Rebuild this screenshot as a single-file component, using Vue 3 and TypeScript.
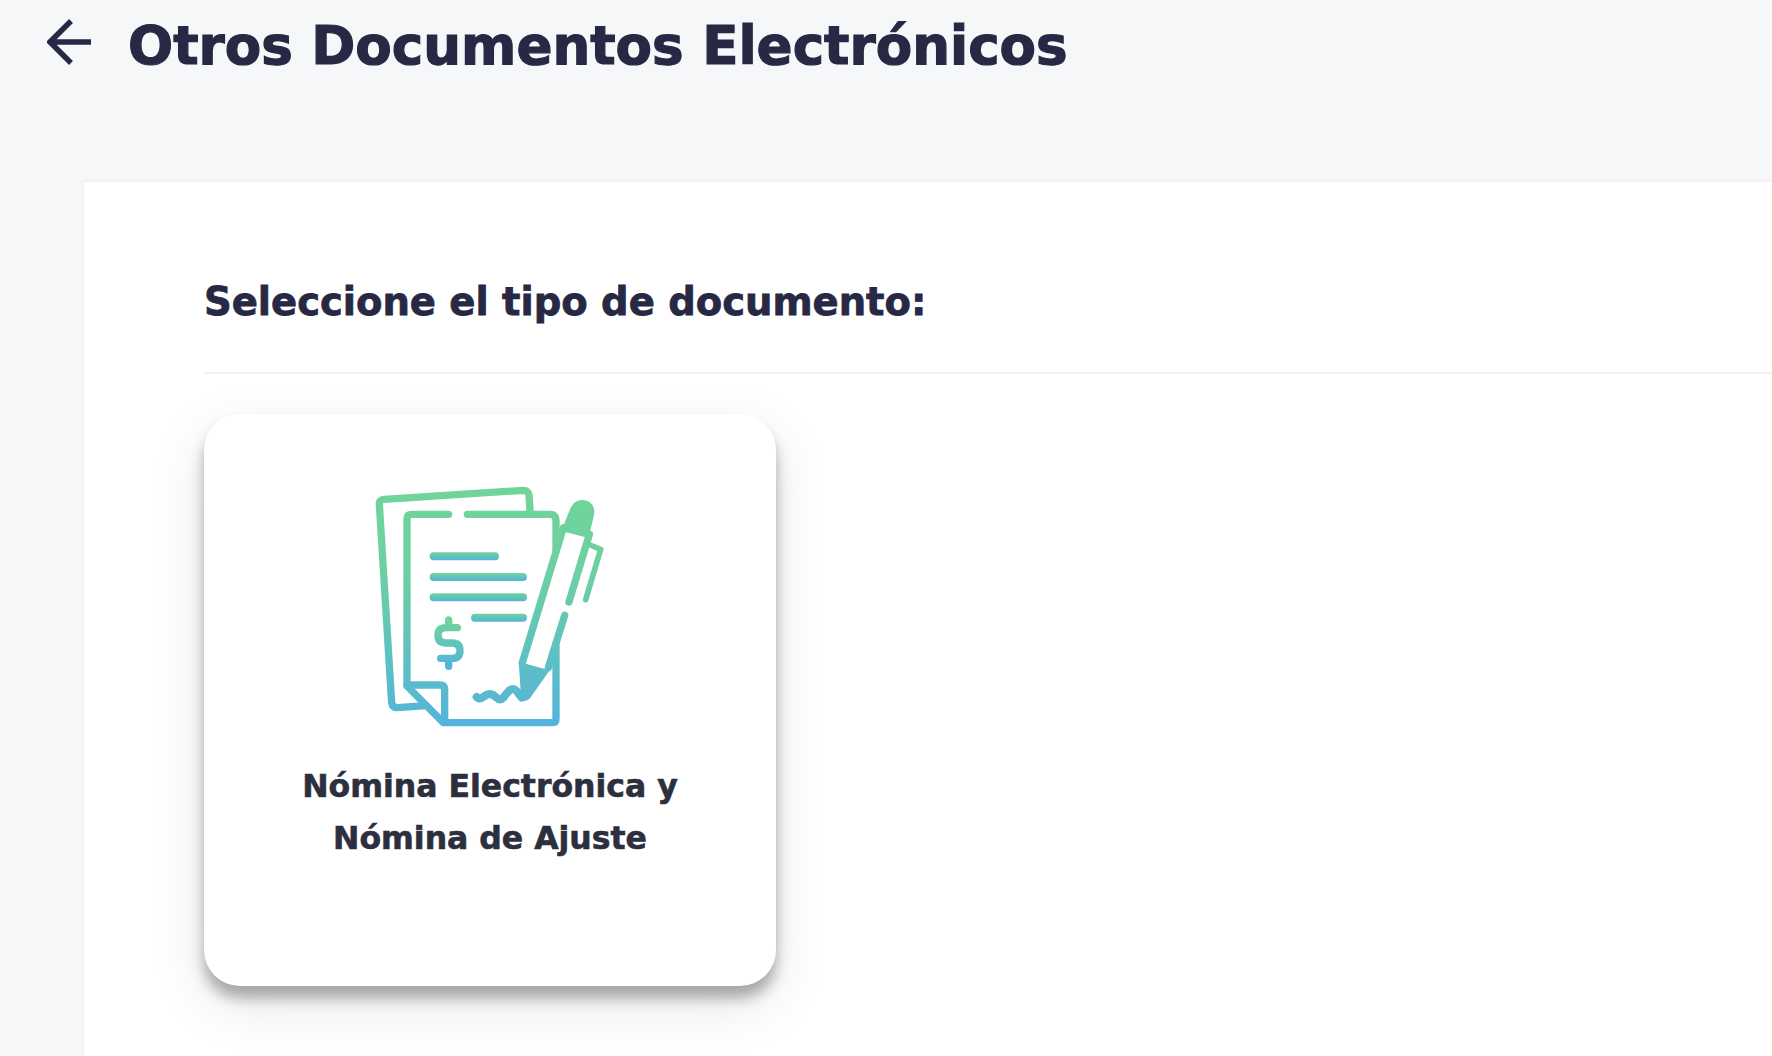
<script setup lang="ts">
const lines = [
  { x: 209, y: 244, w: 208 },
  { x: 209, y: 306, w: 292 },
  { x: 209, y: 367, w: 292 },
  { x: 333, y: 428, w: 168 },
]
</script>

<template>
  <div class="page">
    <header class="top">
      <svg class="back" viewBox="0 0 48 48" width="48" height="48" aria-hidden="true">
        <path d="M44 24H3M24 3 3 24l21 21" fill="none" stroke="#272944" stroke-width="5.5" />
      </svg>
      <h1>Otros Documentos Electrónicos</h1>
    </header>
    <main class="panel">
      <h2>Seleccione el tipo de documento:</h2>
      <hr />
      <button class="card" type="button">
        <svg class="doc" viewBox="0 0 810 810" width="270" height="270" aria-hidden="true">
          <defs>
            <linearGradient id="pg" gradientUnits="userSpaceOnUse" x1="0" y1="50" x2="0" y2="765">
              <stop offset="0" stop-color="#70d49a" />
              <stop offset="0.35" stop-color="#6dd0a2" />
              <stop offset="1" stop-color="#53b3dc" />
            </linearGradient>
            <linearGradient id="lg" x1="0" y1="0" x2="0" y2="1">
              <stop offset="0" stop-color="#70d49a" />
              <stop offset="1" stop-color="#53b3dc" />
            </linearGradient>
          </defs>
          <g fill="none" stroke="url(#pg)" stroke-width="22" stroke-linecap="round" stroke-linejoin="round">
            <path d="M198 704 112 710Q97 710 95 695L58 100Q57 86 72 85L490 58Q504 58 507 72L510 120" />
            <path d="M266 130H155Q141 130 141 144V645L250 755H578Q588 755 588 745V520" />
            <path d="M322 130H570Q588 130 588 148V240" />
            <path d="M141 642H240Q254 642 254 656V750" />
            <path d="M487 575 610 170 688 190 627 393" />
            <path d="M614 433 565 590" />
            <path d="M690 222 722 235 677 386" stroke-width="17" />
            <path d="M350 678C365 695 375 662 395 670 410 675 415 695 430 680 445 660 455 645 470 660L485 680" stroke-width="24" />
            <path d="M266 447V466M266 566V586M292 470H258Q234 470 234 493 234 516 258 516H276Q300 516 300 539 300 562 276 562H242" stroke="url(#lg)" />
          </g>
          <path d="M476 572 497 578 555 594 578 585 510 682Q498 695 484 688Z" fill="url(#pg)" />
          <path d="M612 160 632 110Q644 84 672 87 708 94 702 132L690 182Z" fill="url(#pg)" />
          <rect v-for="l in lines" :key="l.y" :x="l.x" :y="l.y" :width="l.w" height="24" rx="12" fill="url(#lg)" />
        </svg>
        <span class="label">Nómina Electrónica y<br />Nómina de Ajuste</span>
      </button>
    </main>
  </div>
</template>

<style>
html, body { margin: 0; background: #f6f7f9; }
</style>

<style scoped>
.page {
  height: 1056px;
  overflow: hidden;
  background: #f6f7f9;
  font-family: "DejaVu Sans", "Liberation Sans", sans-serif;
}
.top {
  display: flex;
  align-items: center;
  height: 92px;
  padding-left: 47px;
  gap: 33px;
}
.back { flex: none; margin-top: -8px; }
h1 {
  margin: 0;
  font-size: 53.1px;
  font-weight: 700;
  color: #272944;
  white-space: nowrap;
  -webkit-text-stroke: 1.2px #272944;
}
.panel {
  margin: 90px 0 0 84px;
  height: 874px;
  padding: 95px 0 0 120px;
  background: #fff;
  box-shadow: 0 0 4px rgba(0, 0, 0, 0.08);
  box-sizing: border-box;
}
h2 {
  margin: 0;
  font-size: 38.5px;
  line-height: 50px;
  font-weight: 700;
  color: #272944;
  white-space: nowrap;
  -webkit-text-stroke: 0.8px #272944;
}
hr {
  margin: 45px 0 40px;
  border: 0;
  height: 2px;
  background: #efefef;
}
.card {
  display: flex;
  flex-direction: column;
  align-items: center;
  width: 572px;
  height: 572px;
  padding: 57px 0 0;
  border: 0;
  border-radius: 36px;
  background: #fff;
  box-shadow: 0 12px 14px rgba(0, 0, 0, 0.3), 0 18px 56px rgba(0, 0, 0, 0.1);
  font-family: inherit;
}
.doc { flex: none; margin-left: 10px; }
.label {
  margin-top: 19px;
  font-size: 31.5px;
  line-height: 52px;
  font-weight: 700;
  color: #2b2f3e;
  text-align: center;
  -webkit-text-stroke: 0.6px #2b2f3e;
}
</style>
